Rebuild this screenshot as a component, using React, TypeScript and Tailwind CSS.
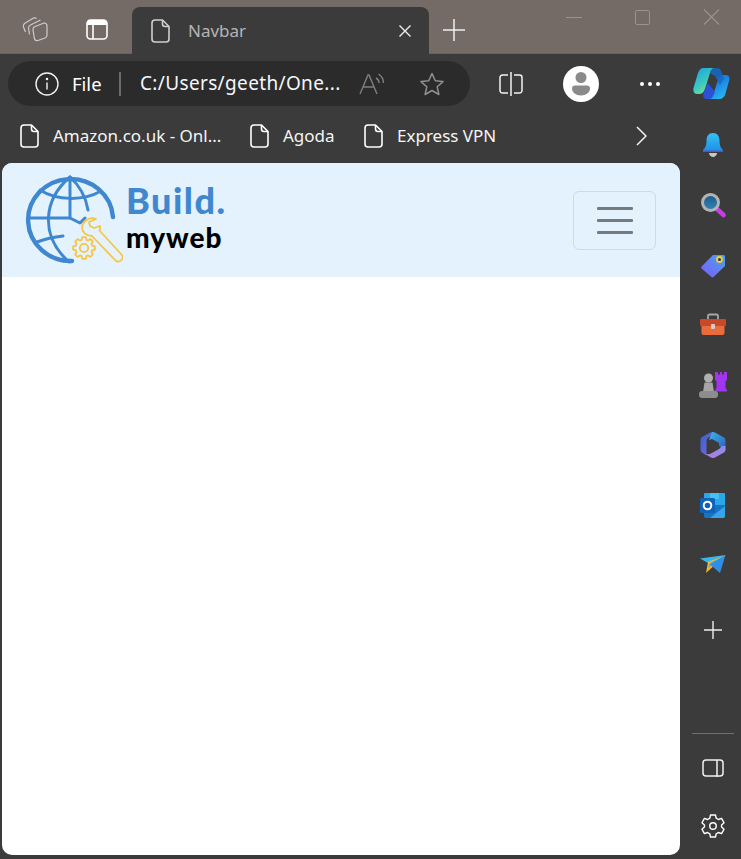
import React from "react";

const DocIcon = ({ c = "#fff", h = 24 }: { c?: string; h?: number }) => (
  <svg width={(h * 20) / 24} height={h} viewBox="0 0 20 24" fill="none" stroke={c} strokeWidth="1.6" strokeLinejoin="round" className="shrink-0">
    <path d="M4 1h7.5L18 7.5V20a3 3 0 0 1-3 3H4a3 3 0 0 1-3-3V4a3 3 0 0 1 3-3Z" />
    <path d="M11.5 1v4a2.5 2.5 0 0 0 2.5 2.5h4" />
  </svg>
);

const gearPath = (cx: number, cy: number, r1: number, r2: number, n: number) => {
  const pts: string[] = [];
  for (let i = 0; i < n; i++) {
    const a = (i / n) * Math.PI * 2;
    const s = (Math.PI * 2) / n;
    [
      [r2, a - s * 0.36],
      [r1, a - s * 0.2],
      [r1, a + s * 0.2],
      [r2, a + s * 0.36],
    ].forEach(([r, t]) => pts.push(`${(cx + r * Math.cos(t)).toFixed(2)} ${(cy + r * Math.sin(t)).toFixed(2)}`));
  }
  return "M" + pts.join("L") + "Z";
};

const Logo = () => (
  <svg width="99" height="92" viewBox="24 174 99 92" fill="none" className="shrink-0">
    <g stroke="#3f88d0" strokeWidth="3" strokeLinecap="round" strokeLinejoin="round">
      <path strokeWidth="4.4" d="M113 217A42.500 41 0 1 0 72 261" />
      <path d="M70 177c-26 22-31 58-1 85" />
      <path d="M70 177c10 9 16 21 18 33" />
      <path d="M70 177v41l10 5 5-5" />
      <path d="M40 190c17 11 44 11 61 1" />
      <path d="M29 218h41" />
      <path d="M37 242c8-3 17-5 26-6" />
    </g>
    <g stroke="#f7c544" strokeWidth="1.800" strokeLinejoin="round">
      <path d="M96 219l-7 3 1 4 4 2 6-2c.5 2 0 3-.5 4.500L121 254a4 4 0 0 1-5.500 6.500L92 236c-6 0-10-4-10-9 1-6 8-11 14-8Z" />
      <path d={gearPath(84, 248, 11, 8.5, 8)} />
      <circle cx="84" cy="248" r="4.200" />
    </g>
  </svg>
);

const Bell = () => (
  <svg width="22" height="26" viewBox="0 0 22 26">
    <defs><linearGradient id="bl" x1="0" y1="0" x2="0" y2="1"><stop offset="0" stopColor="#35c1f1" /><stop offset="1" stopColor="#1f8ee6" /></linearGradient></defs>
    <path d="M7 21h8c0 2-2 4-4 4s-4-2-4-4Z" fill="#c8c8c8" />
    <path d="M11 1c4.500 0 6.500 3.500 6.500 7.500 0 4 .5 7 3.500 9.500v1.500H1V18c3-2.500 3.500-5.500 3.500-9.500C4.500 4.500 6.500 1 11 1Z" fill="url(#bl)" />
    <path d="M1 18h20v1.500H1Z" fill="#3a6fd8" />
  </svg>
);

const Search = () => (
  <svg width="26" height="26" viewBox="0 0 26 26">
    <defs><linearGradient id="sg" x1="0" y1="0" x2="0" y2="1"><stop offset="0" stopColor="#1d5a86" /><stop offset="1" stopColor="#3584b8" /></linearGradient></defs>
    <path d="M17 17l6.500 6" stroke="#c83ce6" strokeWidth="4.500" strokeLinecap="round" />
    <circle cx="10.500" cy="10.500" r="8" fill="url(#sg)" stroke="#b3b3b3" strokeWidth="3" />
  </svg>
);

const Tag = () => (
  <svg width="26" height="26" viewBox="0 0 26 26">
    <defs><linearGradient id="tg" x1="0" y1="1" x2="1" y2="0"><stop offset="0" stopColor="#7a5cf5" /><stop offset="1" stopColor="#4ba2f2" /></linearGradient></defs>
    <path d="M1.500 14.500 13 3h10.500a1.500 1.500 0 0 1 1.500 1.500V14L13.500 25a1.500 1.500 0 0 1-2 0L1.500 16.500a1.500 1.500 0 0 1 0-2Z" fill="url(#tg)" />
    <circle cx="19.500" cy="7.500" r="2.500" fill="#1c3a88" stroke="#f7d21c" strokeWidth="1.800" />
  </svg>
);

const Toolbox = () => (
  <svg width="28" height="24" viewBox="0 0 28 24">
    <path d="M9 6V3a1.500 1.500 0 0 1 1.500-1.500h7A1.500 1.500 0 0 1 19 3v3" fill="none" stroke="#a8a8a8" strokeWidth="1.800" />
    <rect x="1" y="6" width="26" height="7" rx="1" fill="#c8482a" />
    <path d="M2.500 13h23v7a2 2 0 0 1-2 2h-19a2 2 0 0 1-2-2Z" fill="#ea6b3c" />
    <rect x="12" y="11" width="4" height="5" rx="1" fill="#d0d0d0" />
  </svg>
);

const Chess = () => (
  <svg width="28" height="28" viewBox="0 0 28 28">
    <path d="M16 1h3v2.500h2V1h2v2.500h2V1h3v8l-1.500 1v7l1.500 2v1.500H16V19l1.500-2v-7L16 9Z" fill="#a235f0" />
    <circle cx="9.500" cy="7" r="4.500" fill="#b0b0b0" />
    <path d="M5.500 11.500h8L15 21H4Z" fill="#a6a6a6" />
    <rect x="0" y="20" width="19" height="7" rx="3" fill="#8d8d8d" />
  </svg>
);

const M365 = () => (
  <svg width="26" height="28" viewBox="0 0 26 28">
    <defs>
      <linearGradient id="ma" x1="0" y1="0" x2="1" y2="1"><stop offset="0" stopColor="#3b5fd0" /><stop offset="1" stopColor="#7a6ad8" /></linearGradient>
      <linearGradient id="mb" x1="0" y1="0" x2="1" y2="1"><stop offset="0" stopColor="#3fb6e8" /><stop offset="1" stopColor="#2a5bc0" /></linearGradient>
      <linearGradient id="mc" x1="0" y1="0" x2="1" y2="0"><stop offset="0" stopColor="#b27ce0" /><stop offset="1" stopColor="#8f8ae8" /></linearGradient>
    </defs>
    <path d="M11 1 2 6a3 3 0 0 0-1.500 2.500v10c0 2 1 3 3 4l3 2V10a4 4 0 0 1 2-3.500L15 3Z" fill="url(#ma)" />
    <path d="M12 1a4 4 0 0 1 3 .5l9 5a3 3 0 0 1 1.500 2.500v10L19 15v-3L12 8l-3 1Z" fill="url(#mb)" />
    <path d="M25.500 15v4a3 3 0 0 1-1.500 2.500l-9 5a4 4 0 0 1-4 0l-6-3.500c2 0 4 .5 6-.5l8-4.500 3-3Z" fill="url(#mc)" />
  </svg>
);

const Outlook = () => (
  <svg width="26" height="25" viewBox="0 0 26 25">
    <rect x="4" y="0" width="21" height="13" rx="1" fill="#2aa7e8" />
    <rect x="10" y="0" width="9" height="6" fill="#45c0f0" />
    <path d="M4 12h21v11a2 2 0 0 1-2 2H6a2 2 0 0 1-2-2Z" fill="#1673c8" />
    <path d="M10 25 25 13v10a2 2 0 0 1-2 2Z" fill="#35a4e8" />
    <rect x="0" y="5" width="15" height="15" rx="1.500" fill="#0f62b8" />
    <circle cx="7.500" cy="12.500" r="3.800" fill="none" stroke="#fff" strokeWidth="2" />
  </svg>
);

const Plane = () => (
  <svg width="26" height="20" viewBox="0 0 26 20">
    <path d="M0 3.500 25.500 0 8 8Z" fill="#35b8f0" />
    <path d="M25.500 0 8 7 6 18Z" fill="#f5b82a" />
    <path d="M25.500 0 10 8l-2 5Z" fill="#4aa8f0" />
    <path d="M25.500 0 10 9.500 20 18Z" fill="#2f8fe8" />
  </svg>
);

const Copilot = () => (
  <svg width="37" height="34" viewBox="0 0 37 34">
    <defs>
      <linearGradient id="c1" x1="0" y1="0" x2="0.6" y2="1"><stop offset="0" stopColor="#1aa0e0" /><stop offset="0.6" stopColor="#3cc8c0" /><stop offset="1" stopColor="#7ee08a" /></linearGradient>
      <linearGradient id="c2" x1="0.2" y1="0" x2="0.8" y2="1"><stop offset="0" stopColor="#0f6fd0" /><stop offset="0.5" stopColor="#1f8ee8" /><stop offset="1" stopColor="#25c0f0" /></linearGradient>
    </defs>
    <path d="M10 1h13c-3 0-5 1-6 5l-5 16c-1 3-3 5-6 5H4C1 27 0 24 .5 21L5 6c1-3 3-5 5-5Z" fill="url(#c1)" />
    <path d="M14 32h13c2 0 4-2 5-4l4-14c1-3 0-6-3-6h-3c-3 0-4 2-5 5l-5 15c-1 3-3 4-6 4Z" fill="url(#c2)" />
    <path d="M17 6c1-3 3-5 6-5h1c3 0 4 2 5 5l2 6-4 6-5-9Z" fill="#1668c8" opacity=".85" />
    <path d="M12 22l3-6 7 9-3 6c-2 1-4 1-5 1-3 0-4-2-4-4Z" fill="#2c50d8" />
  </svg>
);

const Gear = () => (
  <svg width="26" height="26" viewBox="0 0 24 24" fill="none" stroke="#fff" strokeWidth="1.300" strokeLinejoin="round">
    <path d="M9.700 1.800h4.600l.6 3 2.100 1.200 2.900-1 2.300 4-2.300 2v2l2.300 2-2.300 4-2.900-1-2.100 1.200-.6 3H9.700l-.6-3L7 18l-2.900 1-2.300-4 2.300-2v-2l-2.300-2 2.300-4L7 6l2.100-1.200Z" />
    <circle cx="12" cy="12" r="3" />
  </svg>
);

const items = [<Bell />, <Search />, <Tag />, <Toolbox />, <Chess />, <M365 />, <Outlook />, <Plane />];

export default function App() {
  return (
    <div className="flex h-[859px] w-[741px] flex-col overflow-hidden bg-[#3b3b3b] font-['Noto_Sans','Open_Sans',sans-serif] text-white">
      {/* title strip */}
      <div className="flex h-[54px] shrink-0 items-end border-b border-[#6b625e] bg-[#756b66]">
        <div className="flex h-[47px] w-[132px] items-center">
          <div className="flex w-[70px] justify-center">
            <svg width="26" height="26" viewBox="22 18 26 26" fill="none" stroke="#cfcac7" strokeWidth="1.200" strokeLinejoin="round">
              <path d="M34 28l10-4q3 0 3 3v9q0 2-2 3l-7 2.500q-3 .5-3.500-1.500L33 31q0-2 1-3Z" />
              <path d="M29.500 35.500 28.500 29q0-2 2-3l10-5" />
              <path d="M25.500 33 23.500 28q-.5-2 1-3.500l9-5.500q2-.5 3 .5" />
            </svg>
          </div>
          <div className="flex w-[54px] justify-center">
            <svg width="22" height="21" viewBox="0 0 22 21" fill="none">
              <rect x="1" y="1" width="20" height="19" rx="3.500" stroke="#fff" strokeWidth="1.600" />
              <path d="M1 4.500A3.500 3.500 0 0 1 4.500 1h13A3.500 3.500 0 0 1 21 4.500V6H1Z" fill="#fff" />
              <path d="M7 6v14" stroke="#fff" strokeWidth="1.600" />
            </svg>
          </div>
        </div>
        <div className="-mb-[1px] flex h-[47px] w-[297px] items-center rounded-t-lg bg-[#3b3b3b] pl-[19px] pr-[17px]">
          <DocIcon c="#d0d0d0" />
          <span className="ml-[17px] flex-1 text-[17px] text-[#b5b5b5]">Navbar</span>
          <svg width="14" height="14" viewBox="0 0 14 14" stroke="#eee" strokeWidth="1.400"><path d="M1.500 1.500l11 11M12.500 1.500l-11 11" /></svg>
        </div>
        <div className="flex h-[47px] w-[50px] items-center justify-center">
          <svg width="22" height="22" viewBox="0 0 22 22" stroke="#eee" strokeWidth="1.500"><path d="M11 0v22M0 11h22" /></svg>
        </div>
        <div className="mb-auto flex flex-1 items-center pt-[9px]">
          <div className="ml-[87px] h-[1px] w-[16px] bg-[#9b928e]" />
          <div className="ml-[53px] h-[15px] w-[15px] rounded-[2px] border border-[#9b928e]" />
          <svg className="ml-[53px]" width="17" height="16" viewBox="0 0 17 16" stroke="#9b928e" strokeWidth="1.100"><path d="M1 .5l15 15M16 .5l-15 15" /></svg>
        </div>
      </div>

      {/* toolbar */}
      <div className="flex h-[61px] shrink-0 items-center pb-[2px]">
        <div className="ml-[8px] flex h-[45px] w-[462px] items-center rounded-full bg-[#2b2b2b] pl-[27px]">
          <svg width="24" height="24" viewBox="0 0 24 24" fill="none" stroke="#f2f2f2" strokeWidth="1.400">
            <circle cx="12" cy="12" r="11" />
            <path d="M12 10.500v7" />
            <circle cx="12" cy="7" r=".6" fill="#f2f2f2" />
          </svg>
          <span className="ml-[13px] w-[30px] text-[18.5px] text-white">File</span>
          <span className="ml-[17px] h-[24px] w-[2px] bg-[#6b6b6b]" />
          <span className="ml-[19px] w-[205px] text-[19px] tracking-[0.35px] text-[#f4f7fb]">C:/Users/geeth/One...</span>
          <svg className="ml-[14px]" width="26" height="24" viewBox="0 0 26 24" fill="none" stroke="#7f7f7f" strokeWidth="1.400">
            <path d="M1 22 9 3h1l8 19M4 15h11" />
            <path d="M17 6c2 1 3 3 3 5M19.500 2c3 2 5 5 5 9" />
          </svg>
          <svg className="ml-[34px]" width="26" height="24" viewBox="0 0 26 24" fill="none" stroke="#8f8f8f" strokeWidth="1.500" strokeLinejoin="round">
            <path d="M13 1.500l3.300 7.300 7.700.8-5.800 5.200 1.700 7.700L13 18.500l-6.900 4 1.700-7.700L2 9.600l7.700-.8Z" />
          </svg>
        </div>
        <svg className="ml-[29px]" width="24" height="24" viewBox="0 0 24 24" fill="none" stroke="#f2f2f2" strokeWidth="1.500">
          <path d="M9 3H3.500A2.500 2.500 0 0 0 1 5.500v13A2.500 2.500 0 0 0 3.500 21H9" />
          <path d="M15 3h5.500A2.500 2.500 0 0 1 23 5.500v13a2.500 2.500 0 0 1-2.500 2.500H15" />
          <path d="M12 0v24" />
        </svg>
        <div className="ml-[40px] flex h-[36px] w-[36px] items-center justify-center rounded-full bg-white">
          <svg width="18" height="24" viewBox="0 0 18 24" fill="#8a8a8a">
            <circle cx="9" cy="5.500" r="5.500" />
            <path d="M3 13.500h12a3 3 0 0 1 3 3c0 4-4 7-9 7s-9-3-9-7a3 3 0 0 1 3-3Z" />
          </svg>
        </div>
        <div className="ml-[41px] flex gap-[4px]">
          <span className="h-[4px] w-[4px] rounded-full bg-white" />
          <span className="h-[4px] w-[4px] rounded-full bg-white" />
          <span className="h-[4px] w-[4px] rounded-full bg-white" />
        </div>
        <div className="ml-[33px]"><Copilot /></div>
      </div>

      <div className="flex min-h-0 flex-1">
        <div className="flex w-[680px] shrink-0 flex-col pb-[4px]">
          {/* bookmarks */}
          <div className="flex h-[48px] shrink-0 items-center pb-[6px] pl-[20px] text-[17px] text-[#f5f5f5]">
            <DocIcon />
            <span className="ml-[13px] w-[197px]">Amazon.co.uk - Onl...</span>
            <DocIcon />
            <span className="ml-[13px] w-[81px]">Agoda</span>
            <DocIcon />
            <span className="ml-[13px] w-[238px]">Express VPN</span>
            <svg width="12" height="20" viewBox="0 0 12 20" fill="none" stroke="#f2f2f2" strokeWidth="1.500"><path d="M2 1l9 9-9 9" /></svg>
          </div>
          {/* page */}
          <div className="ml-[2px] flex flex-1 flex-col overflow-hidden rounded-[10px] bg-white">
            <nav className="flex h-[114px] shrink-0 items-center justify-between bg-[#e3f2fd] pl-[22px] pr-[24px]">
              <div className="flex items-center">
                <Logo />
                <div className="mb-[7px] ml-[3px] flex flex-col font-['Lato',sans-serif] font-black leading-none">
                  <span className="text-[36px] tracking-[1.5px] text-[#3f88d0]">Build.</span>
                  <span className="mt-[5px] text-[28px] tracking-[1px] text-black">myweb</span>
                </div>
              </div>
              <button className="flex h-[59px] w-[83px] flex-col items-center justify-center gap-[9px] rounded-[6px] border border-[#cfdbe4]">
                <span className="h-[3px] w-[36px] rounded-[1px] bg-[#737a80]" />
                <span className="h-[3px] w-[36px] rounded-[1px] bg-[#737a80]" />
                <span className="h-[3px] w-[36px] rounded-[1px] bg-[#737a80]" />
              </button>
            </nav>
          </div>
        </div>
        {/* sidebar */}
        <aside className="flex w-[61px] shrink-0 flex-col items-center pb-[20px] pl-[5px]">
          {items.map((icon, i) => (
            <div key={i} className="flex h-[60px] w-full items-center justify-center">{icon}</div>
          ))}
          <div className="mt-[5px] flex h-[60px] items-center">
            <svg width="18" height="18" viewBox="0 0 18 18" stroke="#eee" strokeWidth="1.400"><path d="M9 0v18M0 9h18" /></svg>
          </div>
          <div className="mt-auto h-[1px] w-[42px] bg-[#6f6f6f]" />
          <svg className="mt-[25px]" width="22" height="18" viewBox="0 0 22 18" fill="none" stroke="#f2f2f2" strokeWidth="1.500">
            <rect x="1" y="1" width="20" height="16" rx="3" />
            <path d="M15 1v17" />
          </svg>
          <div className="mt-[36px]"><Gear /></div>
        </aside>
      </div>
    </div>
  );
}
